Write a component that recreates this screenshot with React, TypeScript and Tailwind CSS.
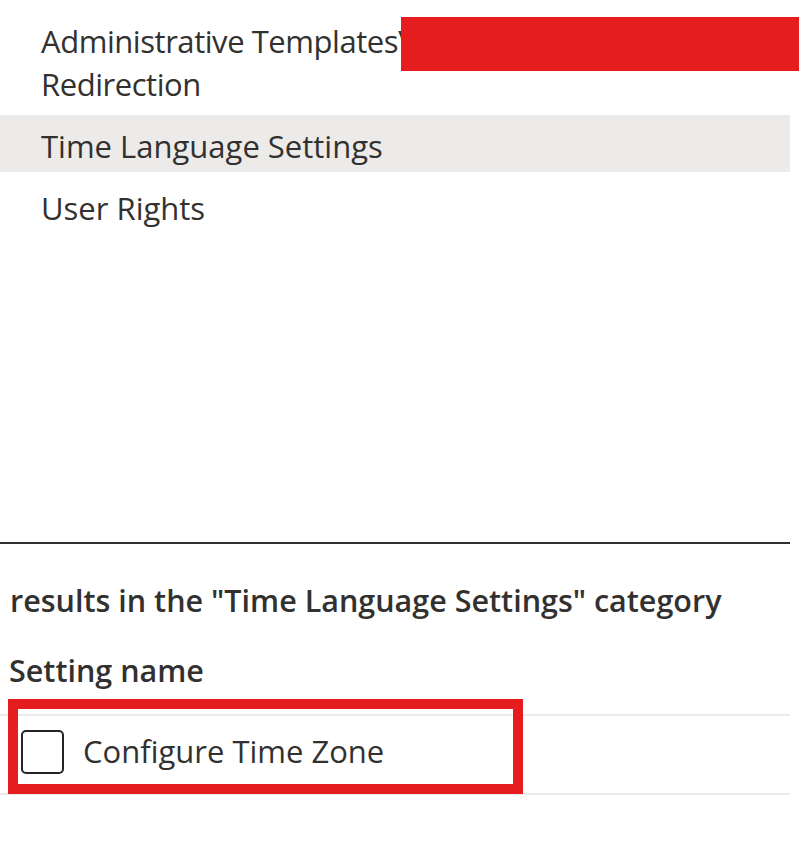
import React from "react";

const font = { fontFamily: '"Open Sans", "Noto Sans", sans-serif' };

const categories = [
  { lines: ["Administrative Templates\\", "Redirection"], selected: false, redacted: true },
  { lines: ["Time Language Settings"], selected: true },
  { lines: ["User Rights"], selected: false },
];

const App = () => {
  return (
    <div className="w-[799px] h-[841px] bg-white text-[#323130] overflow-hidden" style={font}>
      <div className="w-[790px] h-[544px] border-b-2 border-[#323130] pt-[10px] flex flex-col gap-[5px]">
        {categories.map((c) => (
          <div
            key={c.lines[0]}
            className={`relative px-[41px] pt-[10px] pb-[4px] text-[31px] leading-[43px] ${
              c.selected ? "bg-[#edebe9]" : ""
            } ${c.redacted ? "tracking-[-0.45px]" : ""}`}
          >
            {c.lines.map((l) => (
              <div key={l}>{l}</div>
            ))}
            {c.redacted && (
              <div className="absolute left-[401px] top-[7px] w-[398px] h-[54px] bg-[#e61d1f]" />
            )}
          </div>
        ))}
      </div>

      <div className="pl-[10px] pt-[36px] text-[30.5px] font-semibold leading-[40px]">
        results in the "Time Language Settings" category
      </div>
      <div className="pl-[9px] pt-[30px] text-[30.5px] font-semibold leading-[40px]">Setting name</div>

      <div className="relative mt-[24px] w-[790px] h-[81px] border-y-2 border-[#edebe9] flex items-start">
        <div className="ml-[21px] mt-[14px] w-[43px] h-[44px] rounded-[5px] border-2 border-[#252423]" />
        <div className="ml-[19px] mt-[15px] text-[31px] leading-[40px]">Configure Time Zone</div>
        <div className="absolute left-[8px] -top-[17px] w-[515px] h-[95px] border-[10px] border-[#e61d1f]" />
      </div>
    </div>
  );
};

export default App;
